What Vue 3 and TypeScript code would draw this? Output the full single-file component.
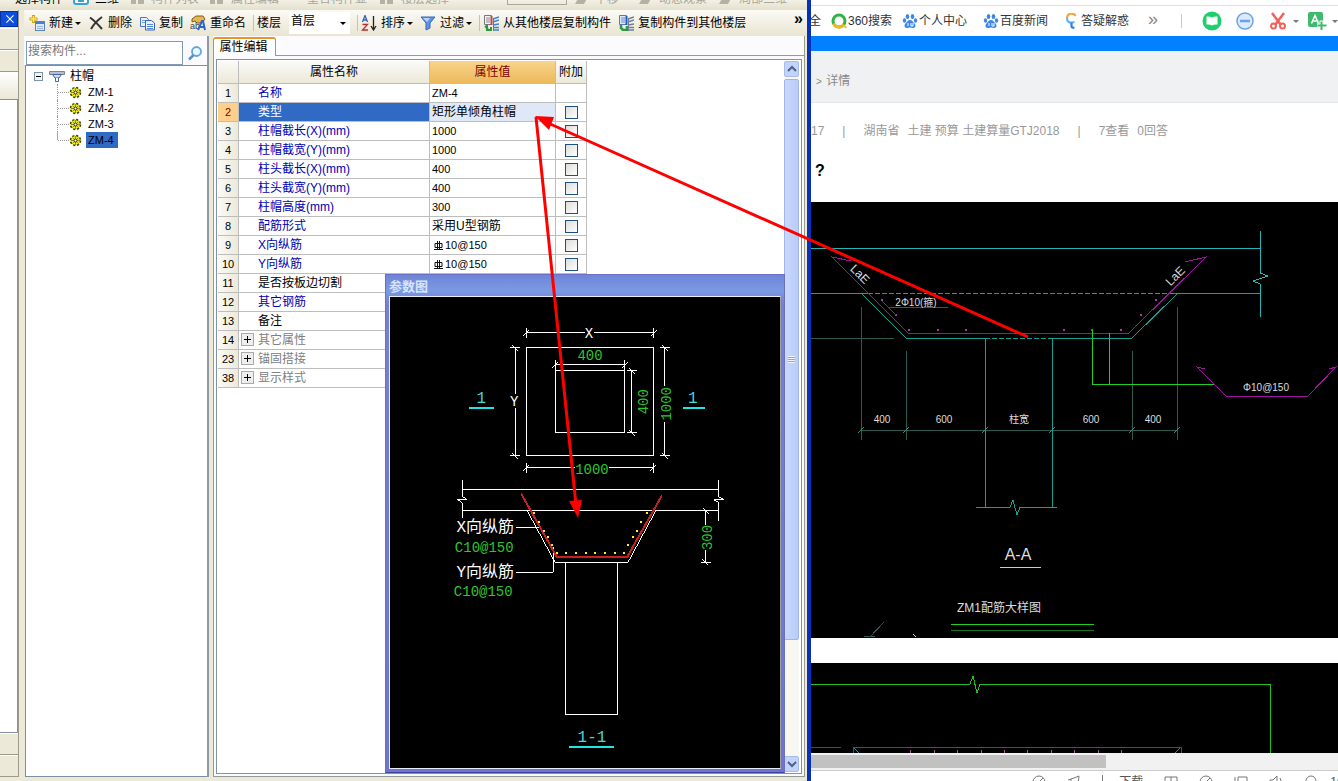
<script setup lang="ts">
import { ref } from 'vue'

interface Row {
  no: number
  name: string
  value?: string
  kind: 'key' | 'plain' | 'group'
  check?: boolean
  rebar?: boolean
}

const rows = ref<Row[]>([
  { no: 1, name: '名称', value: 'ZM-4', kind: 'key' },
  { no: 2, name: '类型', value: '矩形单倾角柱帽', kind: 'key', check: true },
  { no: 3, name: '柱帽截长(X)(mm)', value: '1000', kind: 'key', check: true },
  { no: 4, name: '柱帽截宽(Y)(mm)', value: '1000', kind: 'key', check: true },
  { no: 5, name: '柱头截长(X)(mm)', value: '400', kind: 'key', check: true },
  { no: 6, name: '柱头截宽(Y)(mm)', value: '400', kind: 'key', check: true },
  { no: 7, name: '柱帽高度(mm)', value: '300', kind: 'key', check: true },
  { no: 8, name: '配筋形式', value: '采用U型钢筋', kind: 'key', check: true },
  { no: 9, name: 'X向纵筋', value: '10@150', kind: 'key', check: true, rebar: true },
  { no: 10, name: 'Y向纵筋', value: '10@150', kind: 'key', check: true, rebar: true },
  { no: 11, name: '是否按板边切割', kind: 'plain' },
  { no: 12, name: '其它钢筋', kind: 'key' },
  { no: 13, name: '备注', kind: 'plain' },
  { no: 14, name: '其它属性', kind: 'group' },
  { no: 23, name: '锚固搭接', kind: 'group' },
  { no: 38, name: '显示样式', kind: 'group' },
])

const selectedRow = ref(2)
const caps = ['ZM-1', 'ZM-2', 'ZM-3', 'ZM-4']
const selectedCap = ref('ZM-4')
const floor = ref('首层')

const isNumeric = (v?: string) => !!v && /^[\x20-\x7e]+$/.test(v)

// Dimension ends: a cross bar plus a slanted tick.
const hEnds = (y: number, ...xs: number[]) =>
  xs.map((x) => `M${x} ${y - 5}V${y + 5}M${x - 3} ${y + 3}L${x + 3} ${y - 3}`).join('')
const vEnds = (x: number, ...ys: number[]) =>
  ys.map((y) => `M${x - 5} ${y}H${x + 5}M${x - 3} ${y - 3}L${x + 3} ${y + 3}`).join('')

const dimPath = [
  'M526 333H585M594 333H654', hEnds(333, 526, 654),
  'M555 365H625', hEnds(365, 555, 625),
  'M526 468H575M609 468H654', hEnds(468, 526, 654),
  'M515 348V394M515 408V456', vEnds(515, 348, 456),
  'M632 371V433', vEnds(632, 371, 433),
  'M665 348V386M665 422V456', vEnds(665, 348, 456),
  'M706 511V525M706 551V563', vEnds(706, 511, 563),
].join('')

const barDots = [
  [534, 513], [539, 522], [544, 531], [548, 538], [552, 546], [557, 554], [566, 554], [576, 554], [586, 554],
  [595, 554], [605, 554], [615, 554], [624, 554], [628, 546], [633, 538], [637, 531], [641, 522], [647, 513],
]

const cadDots = [
  [882, 300], [896, 315], [909, 330], [938, 330], [966, 330],
  [1064, 330], [1092, 330], [1121, 330], [1141, 315], [1156, 300],
]

const cadLabels = [
  { t: '400', x: 882 }, { t: '600', x: 944 }, { t: '柱宽', x: 1019 }, { t: '600', x: 1091 }, { t: '400', x: 1153 },
]
const cadTicks = [861, 906, 985, 1052, 1132, 1177].map((x) => `M${x - 3} 433L${x + 3} 427`).join('')
const stirrupTicks = [910, 934, 957, 981, 1004, 1027, 1051, 1074, 1098, 1121].map((x) => `M${x} 750V753`).join('')
</script>

<template>
  <div class="screen">
    <section class="app">
      <div class="upper">
        <span>选择构件</span>
        <svg class="uicon" viewBox="0 0 16 16"><rect x="1" y="1" width="14" height="14" rx="2" fill="#fff" stroke="#35a2d8" stroke-width="2" /><path d="M5 12h6" stroke="#35a2d8" stroke-width="2" /></svg>
        <span>三维</span>
        <svg class="uicon off" viewBox="0 0 16 16"><path d="M2 5h5v10H2zM9 9h6v6H9z" /></svg>
        <span class="off">构件列表</span>
        <svg class="uicon off" viewBox="0 0 16 16"><path d="M1 8h5v7H1zM8 5h6v10H8z" /></svg>
        <span class="off">属性编辑</span>
        <span class="off wide">重合构件显</span>
        <svg class="uicon off" viewBox="0 0 16 16"><path d="M1 8h5v7H1zM8 5h6v10H8z" /></svg>
        <span class="off">楼层选择</span>
        <span class="ubox"></span>
        <svg class="uicon off" viewBox="0 0 16 16"><path d="M2 15h9l4-7H6z" /></svg>
        <span class="off">平移</span>
        <svg class="uicon off far" viewBox="0 0 16 16"><path d="M2 15h9l4-7H6z" /></svg>
        <span class="off">动态观察</span>
        <svg class="uicon off" viewBox="0 0 16 16"><path d="M2 15h9l4-7H6z" /></svg>
        <span class="off">局部三维</span>
      </div>

      <div class="work">
        <aside class="strip">
          <button class="close" type="button" aria-label="关闭">
            <svg viewBox="0 0 19 15"><path d="M6 3.500L14 11.500M14 3.500L6 11.500" stroke="#fff" stroke-width="1.200" /></svg>
          </button>
          <div class="s1"></div>
          <div class="s1"></div>
          <div class="s2"></div>
          <div class="s3"></div>
          <div class="s1"></div>
          <div class="s1"></div>
        </aside>

        <div class="main">
          <div class="toolbar">
            <button class="tool" type="button">
              <svg viewBox="0 0 16 16"><rect x="6.500" y="6.500" width="9" height="9" fill="#dbe9fb" stroke="#5a82c4" /><path d="M7 8h8" stroke="#4a7ed0" stroke-width="2" /><path d="M8 11.500h6M8 13.500h6" stroke="#9bb7e2" /><path d="M4.500 0v8M.500 4h8" stroke="#caa21a" stroke-width="3" /><path d="M4.500 1v6M1.500 4h6" stroke="#ffe760" stroke-width="1.500" /></svg>
              新建<i class="caret"></i>
            </button>
            <button class="tool" type="button">
              <svg viewBox="0 0 16 16"><path d="M2 2.500Q7 6 14 14M14 2Q7 7 3 14" fill="none" stroke="#333" stroke-width="2" /></svg>
              删除
            </button>
            <button class="tool" type="button">
              <svg viewBox="0 0 16 16"><path d="M1.500 2.500h6l2 2v7h-8z" fill="#e6f0ff" stroke="#4a76c8" /><path d="M3 5.500h4M3 7.500h4" stroke="#7ba0e0" /><path d="M6.500 5.500h6l3 2.500v7h-9z" fill="#e6f0ff" stroke="#3565bd" /><path d="M8 9.500h6M8 11.500h6M8 13.500h6" stroke="#5a89da" /></svg>
              复制
            </button>
            <button class="tool" type="button">
              <svg viewBox="0 0 16 16"><path d="M2 4l4-3h7l2 3-3 4H7L5 6 2 7z" fill="#e8b64a" stroke="#7d5f20" /><text x="0" y="14" class="ico-t" fill="#444">ab</text><path d="M8 15l4-9h1l2 9M9.500 12h5" fill="none" stroke="#2f65cf" stroke-width="2" /></svg>
              重命名
            </button>
            <label class="floor" for="floor">楼层</label>
            <span class="select">
              <select id="floor" v-model="floor"><option>首层</option></select>
              <i class="caret"></i>
            </span>
            <button class="tool sep" type="button">
              <svg viewBox="0 0 16 16"><path d="M1.500 7L4 .500 6.500 7M2.500 5h3" fill="none" stroke="#3a5fb8" stroke-width="1.300" /><path d="M1.500 9.500h5L1.500 15h5.500" fill="none" stroke="#b53232" stroke-width="1.300" /><path d="M12.500 1v13M10 11l2.500 4 2.500-4" fill="none" stroke="#222" stroke-width="1.300" /></svg>
              排序<i class="caret"></i>
            </button>
            <button class="tool" type="button">
              <svg viewBox="0 0 16 16"><path d="M1 2h14l-5 6v5l-4 2V8z" fill="#5d94e6" stroke="#3567bd" /><path d="M3 3h7L7 7z" fill="#b9d5fb" /></svg>
              过滤<i class="caret"></i>
            </button>
            <button class="tool sep" type="button">
              <svg viewBox="0 0 16 16"><path d="M1.500 .500h7v9h-7z" fill="#f4f4f4" stroke="#777" /><path d="M3 3h4M3 5h4M3 7h4" stroke="#888" /><path d="M8.500 1v9" stroke="#c04545" stroke-width="2" /><path d="M2 11l3 3M4 10v5h4v-3" fill="none" stroke="#299a42" stroke-width="2" /><path d="M10 4l6-2M10 7l6-2M10 10l6-1M10 12.500h6M10 15h6" stroke="#3d82d2" stroke-width="1.500" /><path d="M10.500 3v13" stroke="#3d82d2" /></svg>
              从其他楼层复制构件
            </button>
            <button class="tool" type="button">
              <svg viewBox="0 0 16 16"><path d="M1.500 .500h7v9h-7z" fill="#dce9fa" stroke="#5579b0" /><path d="M3 3h4M3 5h4M3 7h4" stroke="#6d8cc0" /><path d="M8.500 1v9" stroke="#2458b6" stroke-width="2" /><path d="M3 10v3l2 2h4v-4" fill="none" stroke="#299a42" stroke-width="2.500" /><path d="M10 4l6-2M10 7l6-2M10 10l6-1M10 12.500h6M10 15h6" stroke="#6d8096" stroke-width="1.500" /><path d="M10.500 3v13" stroke="#6d8096" /></svg>
              复制构件到其他楼层
            </button>
            <button class="more" type="button" aria-label="更多">»</button>
          </div>

          <div class="panels">
            <div class="tree-panel">
              <form class="search" @submit.prevent>
                <input type="text" placeholder="搜索构件..." aria-label="搜索构件" />
                <button type="submit" aria-label="搜索">
                  <svg viewBox="0 0 16 16"><circle cx="9.500" cy="6.500" r="4.500" fill="#e8f6ff" stroke="#64a6d8" stroke-width="1.800" /><path d="M6.500 10L2 14.500" stroke="#5d8fc0" stroke-width="2.500" /></svg>
                </button>
              </form>
              <div class="tree">
                <div class="root">
                  <svg class="pm" viewBox="0 0 9 9"><rect x=".500" y=".500" width="8" height="8" fill="#f4f3ee" stroke="#7b93ab" /><path d="M2 4.500h5" stroke="#000" /></svg>
                  <svg class="cap" viewBox="0 0 16 12"><path d="M.500 1.500h15v3H.500z" fill="#b9bfc4" stroke="#7c858c" /><path d="M3.500 4.500h9L10 8H6z" fill="#cfe0f6" stroke="#3c65ab" /><path d="M6.500 8v3.500h3V8" fill="#fff" stroke="#3c65ab" /></svg>
                  <span>柱帽</span>
                </div>
                <ul>
                  <li v-for="c in caps" :key="c">
                    <svg viewBox="0 0 13 13"><circle cx="6.500" cy="6.500" r="5" fill="#eeea22" stroke="#3c3c0a" stroke-width="1.500" stroke-dasharray="2.200 1.730" /><path d="M6.500 2v9M2 6.500h9M3.500 3.500l6 6M9.500 3.500l-6 6" stroke="#77731a" stroke-width=".7" /><circle cx="6.500" cy="6.500" r="1.500" fill="#fff" stroke="#222" /></svg>
                    <button type="button" :class="{ on: c === selectedCap }" @click="selectedCap = c">{{ c }}</button>
                  </li>
                </ul>
              </div>
            </div>

            <div class="prop-panel">
              <div class="tabs"><button type="button" class="tab">属性编辑</button></div>
              <div class="prop-body">
                <div class="grid-area">
                  <table>
                    <colgroup><col class="c-no" /><col class="c-name" /><col class="c-val" /><col class="c-add" /></colgroup>
                    <thead>
                      <tr><th></th><th>属性名称</th><th class="hot">属性值</th><th>附加</th></tr>
                    </thead>
                    <tbody>
                      <tr v-for="r in rows" :key="r.no" :class="{ sel: r.no === selectedRow }" @click="selectedRow = r.no">
                        <td class="no">{{ r.no }}</td>
                        <td class="name" :class="r.kind">
                          <button v-if="r.kind === 'group'" class="plus" type="button" :aria-label="'展开' + r.name"></button>{{ r.name }}
                        </td>
                        <td class="val" :class="{ num: isNumeric(r.value), bar: r.rebar }">
                          <svg v-if="r.rebar" viewBox="0 0 9 11"><path d="M1 3.500h7v4H1zM3.500 1v9M5.500 1v9M0 9.500h9" fill="none" stroke="#111" /></svg>{{ r.value }}
                        </td>
                        <td class="add"><input v-if="r.check" type="checkbox" :aria-label="'附加 ' + r.name" /></td>
                      </tr>
                    </tbody>
                  </table>

                  <div class="vscroll">
                    <button type="button" aria-label="向上滚动"><svg viewBox="0 0 14 14"><path d="M3 9l4-4 4 4" fill="none" stroke="#4d6185" stroke-width="2" /></svg></button>
                    <div class="thumb"><i></i></div>
                    <div class="rest"></div>
                    <button type="button" aria-label="向下滚动"><svg viewBox="0 0 14 14"><path d="M3 5l4 4 4-4" fill="none" stroke="#4d6185" stroke-width="2" /></svg></button>
                  </div>

                  <div class="dialog">
                    <div class="title">参数图</div>
                    <div class="canvas">
                      <svg viewBox="390 297 390 472" class="crisp">
                        <g fill="none" stroke="#fff">
                          <path :d="dimPath" />
                          <path d="M526 348H654V456H526ZM555 371H625V433H555Z" />
                          <path d="M462 490H719M462 511H719M462 480V497L467 500H457L462 503V518M719 480V497L724 500H714L719 503V521" />
                          <path d="M527 511L555 563H628L656 511M565 563V715H618V563" />
                          <path d="M516 528H540M516 573H553V548" />
                        </g>
                        <path d="M521 494L557 558H627L662 496" fill="none" stroke="#c81e1e" stroke-width="2" />
                        <rect v-for="(d, i) in barDots" :key="i" :x="d[0] - 1" :y="d[1] - 1" width="2" height="2" fill="#ffee22" />
                        <path d="M469 408H494M683 408H705M569 748H614" stroke="#1fe5e5" stroke-width="2" />
                        <g class="dt white">
                          <text x="589" y="338">X</text>
                          <text x="514" y="406">Y</text>
                          <text x="485" y="533" class="cn">X向纵筋</text>
                          <text x="485" y="578" class="cn">Y向纵筋</text>
                        </g>
                        <g class="dt green">
                          <text x="590" y="360">400</text>
                          <text x="592" y="474">1000</text>
                          <text x="484" y="553">C10@150</text>
                          <text x="483" y="597">C10@150</text>
                          <text transform="translate(648 402) rotate(-90)">400</text>
                          <text transform="translate(671 404) rotate(-90)">1000</text>
                          <text transform="translate(712 538) rotate(-90)">300</text>
                        </g>
                        <g class="dt cyan">
                          <text x="481" y="403">1</text>
                          <text x="693" y="403">1</text>
                          <text x="592" y="743">1-1</text>
                        </g>
                      </svg>
                    </div>
                  </div>
                </div>
              </div>
            </div>
          </div>
        </div>
      </div>
    </section>

    <section class="browser">
      <nav class="marks">
        <a href="#">全</a>
        <a href="#"><svg viewBox="0 0 16 16"><circle cx="8" cy="8" r="6" fill="none" stroke="#2fb344" stroke-width="3" /><path d="M2.500 10.500A6 6 0 0 0 13 11.500" fill="none" stroke="#f2b91d" stroke-width="3" /><circle cx="14.500" cy="14" r="1.200" fill="#f2b91d" /></svg>360搜索</a>
        <a v-for="m in ['个人中心', '百度新闻']" :key="m" href="#">
          <svg viewBox="0 0 16 16" fill="#3f86e8"><ellipse cx="5.500" cy="3.500" rx="1.800" ry="2.500" /><ellipse cx="10.500" cy="3.500" rx="1.800" ry="2.500" /><ellipse cx="2.500" cy="7.500" rx="1.700" ry="2.200" /><ellipse cx="13.500" cy="7.500" rx="1.700" ry="2.200" /><path d="M8 7c2 0 3 2 4.500 3.500S14 15 11 15c-1.500 0-2-.500-3-.500s-1.500.5-3 .5c-3 0-3-3-1.500-4.500S6 7 8 7z" /><path d="M6 10v3M9 10v3h2v-3" fill="none" stroke="#fff" /></svg>{{ m }}
        </a>
        <a href="#"><svg viewBox="0 0 16 16"><path d="M11.500 3A4.500 4.500 0 0 0 3 5" fill="none" stroke="#f4a73a" stroke-width="2.200" /><path d="M3 5Q3 10 8 9.500L10.500 9" fill="none" stroke="#5db4ee" stroke-width="2.200" /><path d="M7.500 9.500v4Q7.500 15 10.500 14.500" fill="none" stroke="#2d7fe8" stroke-width="2.200" /></svg>答疑解惑</a>
        <span class="raq">»</span>
        <span class="bar-sep"></span>
        <button type="button" aria-label="阅读"><svg viewBox="0 0 20 20"><circle cx="10" cy="10" r="9.500" fill="#1fcf6d" /><path d="M4.500 5.500q3-.500 5.500 1v8q-2.500-1.500-5.500-1zM15.500 5.500q-3-.500-5.500 1v8q2.500-1.500 5.500-1z" fill="#fff" /></svg></button>
        <button type="button" aria-label="拦截"><svg viewBox="0 0 20 20"><circle cx="10" cy="10" r="8" fill="#dceafc" stroke="#6ba3e6" stroke-width="1.500" /><path d="M5 10h10" stroke="#6ba3e6" stroke-width="2.500" /></svg></button>
        <button type="button" aria-label="截图" class="with"><svg viewBox="0 0 20 20"><path d="M4 2l9 12M16 2L7 14" stroke="#f2615b" stroke-width="2.500" /><circle cx="5.500" cy="15" r="2.500" fill="none" stroke="#f2615b" stroke-width="2" /><circle cx="14.500" cy="15" r="2.500" fill="none" stroke="#f2615b" stroke-width="2" /></svg><i class="caret g"></i></button>
        <button type="button" aria-label="翻译" class="with"><svg viewBox="0 0 20 20"><rect x="1" y="1" width="15" height="15" rx="2" fill="#3fba6c" /><path d="M4.500 12.500L8 4.500l3.500 8M6 10h4" fill="none" stroke="#fff" stroke-width="1.600" /><path d="M14.500 9.500v10M10 14.500h9.500" stroke="#fff" stroke-width="4" /><path d="M14.500 10.500v8.500M10.500 14.500h9" stroke="#3fba6c" stroke-width="2" /></svg><i class="caret g"></i></button>
      </nav>
      <div class="band"></div>
      <div class="crumb"><span>&gt;</span> 详情</div>
      <div class="article">
        <p class="meta"><span>17</span><span>|</span><span>湖南省<b></b>土建 预算 土建算量GTJ2018</span><span>|</span><span>7查看<b></b>0回答</span></p>
        <h1>?</h1>
        <svg viewBox="811 202 527 436" class="fig crisp">
          <rect x="811" y="202" width="527" height="436" fill="#000" />
          <g fill="none" stroke="#2b5a50">
            <path d="M811 338H894M861 307V440M906 351V440M1132 351V440M1177 307V440M861 430H1177" />
            <path :d="cadTicks" stroke="#3f9080" />
            <path d="M870 637L884 622M864 636H875" /><path d="M913 634L916 637" stroke="#ddd" />
          </g>
          <g fill="none" stroke="#12a094">
            <path d="M811 248H1261M1260 231V273L1268 276L1253 281L1260 284V317" stroke="#1fb8b8" />
            <path d="M811 293H868M1170 293H1260M862 294L906 338H985M1052 338H1132L1177 294" />
            <path d="M868 293H1170M985 338H1052" stroke-dasharray="5 2" />
            <path d="M985 338V507M1052 338V507M976 507H1010L1013 500L1017 515L1020 507H1057" />
          </g>
          <g fill="none" stroke="#a012a0">
            <path d="M851 261L832 257L908 333H1129L1206 257L1185 262" />
            <path d="M1205 369L1197 367L1226 396H1308L1336 367L1329 369" />
          </g>
          <circle v-for="(d, i) in cadDots" :key="i" :cx="d[0]" :cy="d[1]" r="1" fill="#b030b8" />
          <path d="M1092 330V384H1214M1109 333V384M951 624H1094" fill="none" stroke="#20d020" />
          <path d="M882 301L896 315M888 307H948M951 630H1094" fill="none" stroke="#15751b" />
          <g class="cad">
            <text v-for="l in cadLabels" :key="l.x" :x="l.x" y="423">{{ l.t }}</text>
            <text x="1266" y="391">Φ10@150</text>
            <text x="916" y="306">2Φ10(箍)</text>
            <text transform="translate(857 277) rotate(45)" class="mid">LaE</text>
            <text transform="translate(1178 279) rotate(-45)" class="mid">LaE</text>
            <text x="1018" y="560" class="big">A-A</text>
            <text x="999" y="612" class="cap-t">ZM1配筋大样图</text>
            <path d="M1000 567H1041" stroke="#ccc" />
          </g>
        </svg>
        <svg viewBox="811 663 527 90" class="fig second crisp">
          <rect x="811" y="663" width="527" height="90" fill="#000" />
          <path d="M811 684H970L973 676L977 693L980 684H1270V753" fill="none" stroke="#1fc01f" />
          <path d="M811 747H841" stroke="#2b5a50" />
          <path d="M853 753V747H1181V753" fill="none" stroke="#c000c0" />
          <path d="M854 748L859 753M1180 748L1175 753" stroke="#3a80a0" />
          <path :d="stirrupTicks" stroke="#a060a0" />
        </svg>
      </div>
      <div class="hscroll"><div></div></div>
      <footer>
        <svg viewBox="0 0 14 14"><circle cx="7" cy="7" r="6" /><path d="M3 11L11 3" /></svg>
        <svg viewBox="0 0 14 14"><path d="M1 5l6-2 5-2-1 8M4 4v8" /></svg>
        <i></i>
        <span>下载</span>
        <svg viewBox="0 0 14 14"><path d="M1 2h12v10H1zM7 2v10" /></svg>
        <svg viewBox="0 0 14 14"><circle cx="7" cy="7" r="6" /><path d="M3 11L11 3" /></svg>
        <svg viewBox="0 0 14 14"><path d="M4 2h9v10H4zM1 2v8" /></svg>
        <svg viewBox="0 0 14 14"><path d="M1 5h3l4-4v12L4 9H1zM11 3q3 4 0 8" /></svg>
        <svg viewBox="0 0 14 14" class="near"><circle cx="7" cy="6" r="5" /></svg>
        <span>100%</span>
      </footer>
    </section>

    <svg class="arrows">
      <path d="M1028 337L548 123M536 117L576 505" fill="none" stroke="#f00" stroke-width="3" />
      <path d="M535 116L554 117L549 130ZM578 518L569 501L582 500Z" fill="#f00" />
    </svg>
  </div>
</template>

<style>
body {
  margin: 0;
  overflow: hidden;
}
</style>

<style scoped>
.screen {
  position: relative;
  display: grid;
  grid-template-columns: 811px minmax(0, 1fr);
  height: 100vh;
  overflow: hidden;
  background: #fff;
  color: #000;
  font: 12px/16px "Liberation Sans", "Noto Sans CJK SC", sans-serif;
}
.screen * {
  box-sizing: border-box;
}
button, input, select {
  font: inherit;
  color: inherit;
  margin: 0;
  padding: 0;
  border: 0;
  background: none;
  border-radius: 0;
}
svg {
  display: block;
  flex: none;
}
.crisp {
  shape-rendering: crispEdges;
}
.caret {
  width: 0;
  height: 0;
  border: 3px solid transparent;
  border-top-color: #000;
  border-bottom: 0;
}
.caret.g {
  border-top-color: #777;
}

/* modelling application */
.app {
  display: flex;
  flex-direction: column;
  min-height: 0;
  background: #ece9d8;
  border-right: 4px solid #0831b9;
}
.upper {
  height: 10px;
  flex: none;
  display: flex;
  align-items: flex-end;
  gap: 6px;
  padding: 0 0 5px 15px;
  overflow: hidden;
  white-space: nowrap;
  background: linear-gradient(#f3f1e6, #e4e0cd);
}
.upper span {
  line-height: 12px;
  margin-right: 4px;
}
.upper .off {
  color: #a9a698;
  fill: #b5b2a5;
}
.upper .wide {
  margin: 0 6px 0 18px;
}
.uicon {
  width: 16px;
  height: 16px;
}
.uicon.far {
  margin-left: 8px;
}
.upper .ubox {
  width: 60px;
  height: 16px;
  margin: 0 0 0 48px;
  border: 1px solid #aca899;
}
.work {
  flex: 1;
  min-height: 0;
  display: flex;
  gap: 5px;
  padding-bottom: 4px;
}
.strip {
  width: 19px;
  flex: none;
  display: flex;
  flex-direction: column;
  border-right: 1px solid #9d9a8b;
}
.close {
  height: 16px;
  margin: 1px 0;
  background: #0a4fe0;
  border: 1px solid #06309a;
}
.close svg {
  width: 17px;
  height: 14px;
}
.s1 {
  height: 22px;
  border-bottom: 1px solid #9d9a8b;
  border-top: 1px solid #fff;
}
.s2 {
  height: 27px;
  background: linear-gradient(#fff, #ebe8d8);
}
.s3 {
  flex: 1;
  background: #fff;
  border: 1px solid #7f93a5;
  border-left: 0;
}
.main {
  flex: 1;
  min-width: 0;
  display: flex;
  flex-direction: column;
}
.toolbar {
  flex: none;
  height: 26px;
  display: flex;
  align-items: center;
  gap: 7px;
  padding: 0 4px 0 5px;
  white-space: nowrap;
  background: linear-gradient(#fbfaf5, #f2efe3 50%, #e9e5d3);
}
.tool {
  display: flex;
  align-items: center;
  gap: 4px;
}
.tool svg {
  width: 16px;
  height: 16px;
}
.tool .caret {
  margin-left: -2px;
}
.sep, .floor {
  border-left: 1px solid #c5c2b2;
  padding-left: 3px;
}
.ico-t {
  font-size: 9px;
}
.select {
  position: relative;
  width: 61px;
  margin-left: 1px;
}
.select select {
  width: 100%;
  height: 22px;
  background: #fff;
  appearance: none;
  padding: 0 2px 4px;
}
.select .caret {
  position: absolute;
  right: 4px;
  top: 10px;
  pointer-events: none;
}
.more {
  margin-left: auto;
  height: 26px;
  padding-bottom: 8px;
  font-size: 16px;
  font-weight: bold;
}
.panels {
  flex: 1;
  min-height: 0;
  display: flex;
  gap: 4px;
}
.tree-panel {
  width: 185px;
  flex: none;
  display: flex;
  flex-direction: column;
  border-right: 2px solid #8f9aa3;
}
.search {
  display: flex;
  background: #fbfbfd;
  padding: 5px 0 0 2px;
}
.search input {
  width: 157px;
  height: 24px;
  background: #fff;
  border: 1px solid #7f9db9;
  padding: 0 1px 4px;
}
.search input::placeholder {
  color: #777;
  opacity: 1;
}
.search button {
  flex: 1;
  display: grid;
  place-items: center;
}
.search svg {
  width: 16px;
  height: 16px;
}
.tree {
  flex: 1;
  margin-left: 1px;
  padding-top: 2px;
  background: #fff;
  border: 1px solid #7c8f9e;
  border-right: 0;
}
.root {
  display: flex;
  align-items: center;
  height: 16px;
  gap: 5px;
  padding-left: 8px;
}
.pm {
  width: 9px;
  height: 9px;
}
.cap {
  width: 16px;
  height: 12px;
  margin-left: 1px;
}
.tree ul {
  list-style: none;
  margin: 0 0 0 31px;
  padding: 0;
}
.tree li {
  display: flex;
  align-items: center;
  height: 16px;
  border-left: 1px dotted #999;
  font-size: 11px;
}
.tree li:last-child {
  border-color: transparent;
  border-image: linear-gradient(#aaa 50%, transparent 50%) 1;
}
.tree li::before {
  content: "";
  width: 11px;
  border-top: 1px dotted #999;
}
.tree li svg {
  width: 13px;
  height: 13px;
}
.tree li button {
  height: 16px;
  margin-left: 4px;
  padding: 0 2px;
}
.tree li .on {
  background: #316ac5;
  padding-right: 4px;
}

.prop-panel {
  flex: 1;
  min-width: 0;
  display: flex;
  flex-direction: column;
  margin-right: 2px;
  background: #fbfbfe;
  border-right: 1px solid #9a9a8d;
}
.tabs {
  flex: none;
  height: 20px;
  display: flex;
  padding-top: 1px;
}
.tabs::after {
  content: "";
  flex: 1;
  border-bottom: 1px solid #919b9c;
}
.tab {
  width: 63px;
  line-height: 14px;
  padding: 0 2px 2px 0;
  background: #fff;
  border: 1px solid #919b9c;
  border-top: 2px solid #e5972d;
  border-bottom: 0;
  border-radius: 3px 3px 0 0;
}
.prop-body {
  flex: 1;
  min-height: 0;
  display: flex;
  padding: 3px 2px 2px;
  border-left: 1px solid #919b9c;
  border-bottom: 1px solid #919b9c;
}
.grid-area {
  position: relative;
  flex: 1;
  min-width: 0;
  display: flex;
  justify-content: space-between;
  background: #fff;
  border: 1px solid #7c93a8;
  padding: 1px;
}
table {
  width: 369px;
  table-layout: fixed;
  border-spacing: 0;
  align-self: flex-start;
}
.c-no { width: 21px; }
.c-name { width: 191px; }
.c-val { width: 126px; }
.c-add { width: 31px; }
th, td {
  padding: 0;
  border-right: 1px solid #bdbdbd;
  border-bottom: 1px solid #bdbdbd;
  white-space: nowrap;
}
th {
  height: 23px;
  font-weight: normal;
  background: linear-gradient(#fbfaf6, #ece9da);
}
th.hot {
  color: #800000;
  background: linear-gradient(#f7d48c, #edb95a);
}
td {
  height: 19px;
  line-height: 18px;
}
.no {
  text-align: center;
  font-size: 11px;
  background: linear-gradient(90deg, #fbfaf6, #ece9da);
}
.name {
  position: relative;
  padding-left: 19px;
}
.key { color: #0000b4; }
.group { color: #808080; }
.plus {
  position: absolute;
  left: 2px;
  top: 2px;
  width: 13px;
  height: 13px;
  border: 1px solid #aaa;
  background: linear-gradient(#000, #000) center / 7px 1px no-repeat, linear-gradient(#000, #000) center / 1px 7px no-repeat, #eee;
}
.val {
  padding-left: 2px;
}
.num {
  font-size: 11px;
}
.bar svg {
  display: inline-block;
  width: 9px;
  height: 11px;
  margin: 0 2px;
  vertical-align: -2px;
}
.add {
  text-align: center;
  line-height: 0;
}
.add input {
  appearance: none;
  width: 13px;
  height: 13px;
  border: 1px solid #1c5180;
  background: linear-gradient(135deg, #dcdcd7, #fff);
}
.sel .name {
  background: #316ac5;
  color: #fff;
}
.sel .val {
  background: #dfe8f6;
}
.sel .no {
  background: #ffd08a;
  color: #800000;
}

.vscroll {
  width: 15px;
  margin-right: 1px;
  display: flex;
  flex-direction: column;
  background: #f8f7f2;
}
.vscroll button {
  flex: none;
  height: 16px;
  display: grid;
  place-items: center;
  background: #c3d3fb;
  border: 1px solid #a9bcee;
  border-radius: 2px;
}
.vscroll svg {
  width: 14px;
  height: 14px;
}
.thumb {
  flex: 561;
  display: grid;
  place-items: center;
  margin-top: 2px;
  background: linear-gradient(90deg, #c9d8fc, #b9ccf8);
  border: 1px solid #a1b5ec;
  border-radius: 2px;
}
.thumb i {
  width: 7px;
  height: 7px;
  background: repeating-linear-gradient(#eef4fe 0 1px, #8ca5e0 1px 2px);
}
.rest {
  flex: 117;
}

.dialog {
  position: absolute;
  left: 168px;
  right: 16px;
  top: 214px;
  bottom: 0;
  display: flex;
  flex-direction: column;
  padding: 0 3px 3px;
  background: linear-gradient(#6f85d8, #7b9ae3 16px, #7680d6 28px, #6c74d0);
  border: 1px solid #6871c4;
  border-bottom-color: #3e479f;
}
.title {
  flex: none;
  height: 21px;
  line-height: 23px;
  font-size: 13px;
  font-weight: bold;
  color: #d8e4f8;
}
.canvas {
  flex: 1;
  min-height: 0;
  background: #000;
  border: 1px solid #e8ebf8;
  border-right-color: #a09ca0;
}
.canvas svg {
  width: 100%;
  height: 100%;
}
.dt text {
  font: 14px "Liberation Mono", "Noto Sans CJK SC", monospace;
  text-anchor: middle;
}
.dt .cn {
  font-size: 16px;
}
.white { fill: #fff; }
.green { fill: #2fc52f; }
.cyan { fill: #3fdcd8; }
.dt.cyan text { font-size: 16px; }

/* browser window */
.browser {
  display: flex;
  flex-direction: column;
  min-width: 0;
  min-height: 0;
  background: #fff;
}
.marks {
  flex: none;
  height: 31px;
  margin-top: 5px;
  border-top: 1px solid #ddd;
  display: flex;
  align-items: center;
  white-space: nowrap;
  overflow: hidden;
}
.marks a {
  display: flex;
  align-items: center;
  gap: 1px;
  margin-right: 10px;
  color: #333;
  text-decoration: none;
}
.marks a:first-child {
  margin: 0 10px 0 -2px;
}
.marks a svg {
  width: 16px;
  height: 16px;
}
.marks a + a + a {
  margin-right: 16px;
}
.raq {
  font-size: 18px;
  color: #888;
  margin: 0 23px 4px 3px;
}
.bar-sep {
  height: 14px;
  border-left: 1px solid #ccc;
  margin-right: 20px;
}
.marks button {
  display: flex;
  align-items: center;
  margin-right: 13px;
}
.marks button svg {
  width: 20px;
  height: 20px;
}
.marks .with {
  gap: 5px;
  margin-right: 8px;
}
.band {
  flex: none;
  height: 15px;
  background: #0180ff;
}
.crumb {
  flex: none;
  height: 52px;
  line-height: 60px;
  padding-left: 5px;
  color: #888;
  background: #f0f1f3;
  border-bottom: 1px solid #e6e6e6;
}
.crumb span {
  font-size: 10px;
  margin-right: 1px;
}
.article {
  flex: 1;
  min-height: 0;
  overflow: hidden;
}
.meta {
  display: flex;
  gap: 18px;
  margin: 0;
  padding: 20px 0 16px;
  color: #999;
  white-space: pre;
}
.meta b {
  padding-left: 8px;
}
h1 {
  margin: 0;
  padding: 0 0 15px 4px;
  font-size: 16px;
  line-height: 32px;
  font-weight: bold;
}
.fig {
  width: 100%;
  height: auto;
}
.second {
  margin-top: 25px;
}
.cad text {
  fill: #ddd;
  font: 10px "Liberation Sans", "Noto Sans CJK SC", sans-serif;
  text-anchor: middle;
}
.cad text.mid { font-size: 12px; }
.cad text.big { font-size: 16px; }
.cad text.cap-t { font-size: 12px; }
.hscroll {
  flex: none;
  height: 17px;
  padding: 2px 0;
  background: #f1f1f1;
}
.hscroll div {
  width: 56%;
  height: 13px;
  background: #c1c1c1;
}
footer {
  flex: none;
  height: 11px;
  display: flex;
  align-items: flex-start;
  justify-content: flex-end;
  gap: 21px;
  padding-top: 4px;
  margin-right: -23px;
  border-top: 1px solid #ccc;
  overflow: hidden;
  color: #555;
  white-space: nowrap;
}
footer svg {
  width: 14px;
  height: 14px;
  fill: none;
  stroke: #777;
}
footer .near {
  margin-right: -9px;
}
footer i {
  height: 14px;
  margin-right: -5px;
  border-left: 1px solid #777;
}
footer span {
  line-height: 14px;
}
.arrows {
  position: absolute;
  inset: 0;
  width: 100%;
  height: 100%;
  pointer-events: none;
}
</style>
